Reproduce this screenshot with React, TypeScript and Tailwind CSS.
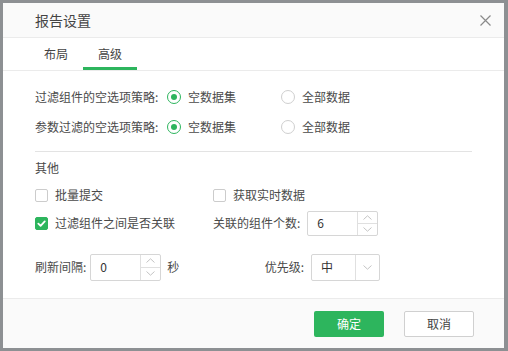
const FONT = { fontFamily: '"Noto Sans CJK SC", "Noto Sans", sans-serif' }

function Radio({ checked, label }: { checked?: boolean; label: string }) {
  return (
    <div className="flex items-center gap-[7px]">
      <span
        className={`flex h-[14px] w-[14px] items-center justify-center rounded-full border ${
          checked ? 'border-[#2db55d] border-[1.5px]' : 'border-[#cfcfcf]'
        }`}
      >
        {checked && <span className="h-[6px] w-[6px] rounded-full bg-[#2db55d]" />}
      </span>
      <span>{label}</span>
    </div>
  )
}

function Checkbox({ checked, label }: { checked?: boolean; label: string }) {
  return (
    <div className="flex items-center gap-[7px]">
      <span
        className={`flex h-[13px] w-[13px] items-center justify-center rounded-[2px] border ${
          checked ? 'border-[#2db55d] bg-[#2db55d]' : 'border-[#cccccc] bg-white'
        }`}
      >
        {checked && (
          <svg width="9" height="9" viewBox="0 0 10 10" fill="none">
            <path d="M1.5 5.2 L4 7.6 L8.6 2.6" stroke="white" strokeWidth="2" strokeLinecap="round" strokeLinejoin="round" />
          </svg>
        )}
      </span>
      <span>{label}</span>
    </div>
  )
}

function Chevron({ up }: { up?: boolean }) {
  return (
    <svg width="9" height="5" viewBox="0 0 9 5" fill="none">
      <path d={up ? 'M0.5 4.5 L4.5 0.8 L8.5 4.5' : 'M0.5 0.5 L4.5 4.2 L8.5 0.5'} stroke="#c4c4c4" strokeWidth="1" />
    </svg>
  )
}

function NumberInput({ value, height }: { value: string; height: string }) {
  return (
    <div className={`flex w-[71px] ${height} rounded-[2px] border border-[#d6d6d6] bg-white`}>
      <div className="flex flex-1 items-center pl-[9px] text-[#333]">{value}</div>
      <div className="flex w-[20px] flex-col border-l border-[#e0e0e0]">
        <div className="flex flex-1 items-center justify-center">
          <Chevron up />
        </div>
        <div className="flex flex-1 items-center justify-center border-t border-[#e0e0e0]">
          <Chevron />
        </div>
      </div>
    </div>
  )
}

export default function App() {
  return (
    <div className="h-[351px] w-[508px] bg-[#8d9093] pb-[3px] pl-[3px] pr-[4px] pt-[3px]" style={FONT}>
      <div className="flex h-full w-full flex-col bg-white text-[12px] text-[#4a4a4a]">
        <div className="flex h-[35px] items-center justify-between border-b border-[#ebebeb] bg-[#fafafa] pl-[32px] pr-[13px]">
          <span className="text-[14px] text-[#444]">报告设置</span>
          <svg width="11" height="11" viewBox="0 0 11 11">
            <path d="M0.5 0.5 L10.5 10.5 M10.5 0.5 L0.5 10.5" stroke="#8a8a8a" strokeWidth="1.2" />
          </svg>
        </div>

        <div className="flex h-[33px] border-b border-[#ebebeb] pl-[26px]">
          <div className="flex w-[54px] items-center justify-center border-b-[3px] border-transparent pt-[2px] text-[#444]">布局</div>
          <div className="flex w-[54px] items-center justify-center border-b-[3px] border-[#2db55d] pt-[2px] text-[#444]">高级</div>
        </div>

        <div className="flex flex-1 flex-col px-[32px] pt-[11px]">
          <div className="flex h-[30px] items-center">
            <span className="w-[132px]">过滤组件的空选项策略:</span>
            <div className="w-[114px]">
              <Radio checked label="空数据集" />
            </div>
            <Radio label="全部数据" />
          </div>
          <div className="flex h-[30px] items-center">
            <span className="w-[132px]">参数过滤的空选项策略:</span>
            <div className="w-[114px]">
              <Radio checked label="空数据集" />
            </div>
            <Radio label="全部数据" />
          </div>

          <div className="mt-[9px] h-px bg-[#e3e3e3]" />

          <div className="mt-[6px] flex h-[20px] items-center">其他</div>

          <div className="mt-[3px] flex h-[28px] items-center">
            <div className="w-[178px]">
              <Checkbox label="批量提交" />
            </div>
            <Checkbox label="获取实时数据" />
          </div>
          <div className="flex h-[28px] items-center">
            <div className="w-[178px]">
              <Checkbox checked label="过滤组件之间是否关联" />
            </div>
            <span>关联的组件个数:</span>
            <div className="ml-[7px]">
              <NumberInput value="6" height="h-[25px]" />
            </div>
          </div>

          <div className="mt-[16px] flex h-[28px] items-center">
            <div className="flex w-[178px] items-center">
              <span>刷新间隔:</span>
              <div className="ml-[4px]">
                <NumberInput value="0" height="h-[27px]" />
              </div>
              <span className="ml-[6px]">秒</span>
            </div>
            <span className="w-[91px] text-right">优先级:</span>
            <div className="ml-[7px] flex h-[27px] w-[69px] rounded-[2px] border border-[#d6d6d6] bg-white">
              <div className="flex flex-1 items-center pl-[9px] text-[#333]">中</div>
              <div className="flex w-[24px] items-center justify-center border-l border-[#e0e0e0]">
                <Chevron />
              </div>
            </div>
          </div>
        </div>

        <div className="flex h-[50px] items-center justify-end gap-[20px] border-t border-[#ebebeb] bg-[#fafafa] pr-[30px]">
          <button className="h-[26px] w-[70px] rounded-[2px] bg-[#2db55d] text-[12px] text-white">确定</button>
          <button className="h-[26px] w-[70px] rounded-[2px] border border-[#d0d0d0] bg-white text-[12px] text-[#444]">取消</button>
        </div>
      </div>
    </div>
  )
}
